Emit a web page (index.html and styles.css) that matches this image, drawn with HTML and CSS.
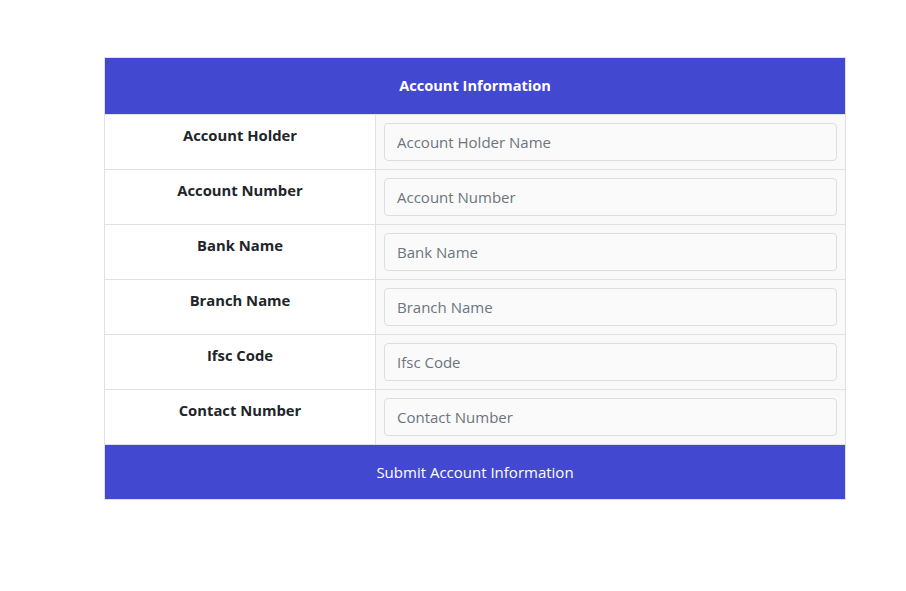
FILE: index.html
```html
<!DOCTYPE html>
<html>
<head>
<meta charset="utf-8">
<link rel="stylesheet" href="styles.css">
</head>
<body>
<div class="wrap">
  <table class="acct">
    <thead>
      <tr><th colspan="2" class="head">Account Information</th></tr>
    </thead>
    <tbody>
      <tr><td class="label">Account Holder</td><td class="field"><input class="inp" placeholder="Account Holder Name"></td></tr>
      <tr><td class="label">Account Number</td><td class="field"><input class="inp" placeholder="Account Number"></td></tr>
      <tr><td class="label">Bank Name</td><td class="field"><input class="inp" placeholder="Bank Name"></td></tr>
      <tr><td class="label">Branch Name</td><td class="field"><input class="inp" placeholder="Branch Name"></td></tr>
      <tr><td class="label">Ifsc Code</td><td class="field"><input class="inp" placeholder="Ifsc Code"></td></tr>
      <tr><td class="label">Contact Number</td><td class="field"><input class="inp" placeholder="Contact Number"></td></tr>
      <tr><td colspan="2" class="submit">Submit Account Information</td></tr>
    </tbody>
  </table>
</div>
</body>
</html>
```
FILE: styles.css
```css
html, body { margin: 0; padding: 0; background: #fff; }
body { font-family: "Open Sans", "Noto Sans", sans-serif; color: #212529; }
.wrap { padding: 57px 0 0 104px; }
.acct { width: 742px; border-collapse: collapse; border: 1px solid #dee2e6; }
.acct td, .acct th { border: 1px solid #dee2e6; }
.head { background: #4348d0; color: #fff; font-weight: 700; font-size: 14.6px; height: 54px; padding: 0 0 2px; text-align: center; }
.label { width: 254px; text-align: center; vertical-align: top; font-weight: 700; font-size: 14.8px; line-height: 24px; padding: 8px 8px 22px; background: #fff; }
.field { padding: 8px; background: #f9f9f9; }
.inp { display: block; box-sizing: border-box; width: 100%; height: 38px; border: 1px solid #dedede; border-radius: 4px; background: #fafafa; padding: 6px 12px; font-family: "Open Sans", "Noto Sans", sans-serif; font-size: 15px; color: #495057; }
.inp::placeholder { color: #6c757d; }
.submit { background: #4348d0; color: #fff; text-align: center; font-size: 15px; height: 54px; padding: 0; }
```
